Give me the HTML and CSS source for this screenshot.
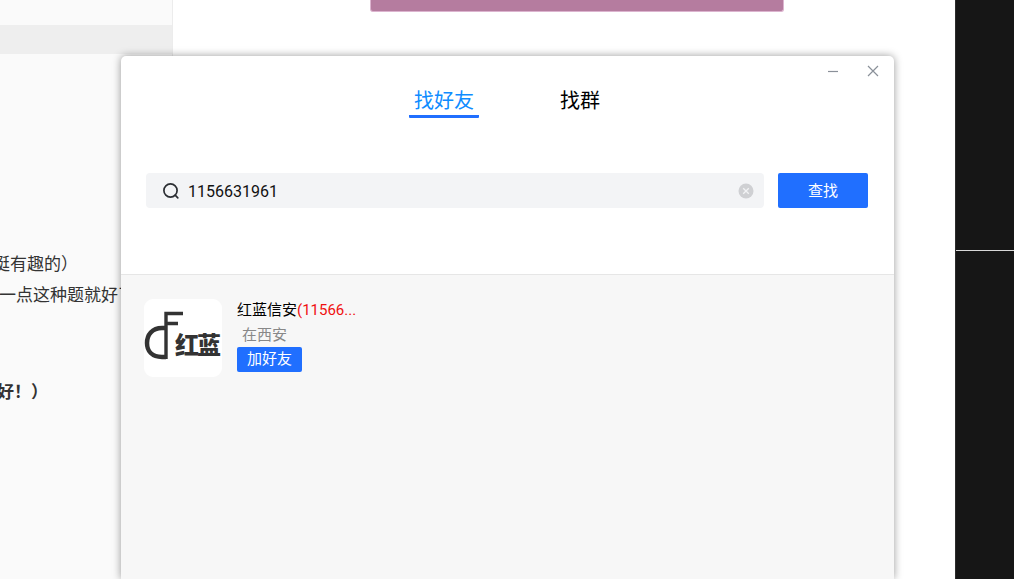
FILE: index.html
```html
<!DOCTYPE html>
<html lang="zh-CN">
<head>
    <meta charset="UTF-8">
    <meta name="viewport" content="width=device-width, initial-scale=1.0">
    <title>找好友</title>
    <link rel="stylesheet" href="styles.css">
</head>
<body>
    <div class="page">
        <aside class="sidebar">
            <div class="sidebar-stripe"></div>
            <div class="article">
                <p class="line line-first">挺有趣的）</p>
                <p class="line line-second">一点这种题就好了</p>
                <p class="line line-bold">好！）</p>
            </div>
        </aside>
        <main class="main">
            <div class="banner"></div>
        </main>
        <div class="dark-panel">
            <div class="dark-top"></div>
            <div class="dark-bottom"></div>
        </div>
    </div>

    <section class="dialog">
        <div class="window-controls">
            <svg class="icon-min" width="12" height="12" viewBox="0 0 12 12"><path d="M1 6.5h10" stroke="#8a9099" stroke-width="1.2"/></svg>
            <svg class="icon-close" width="12" height="12" viewBox="0 0 12 12"><path d="M1 1l10 10M11 1L1 11" stroke="#8a9099" stroke-width="1.2" fill="none"/></svg>
        </div>

        <nav class="tabs">
            <a class="tab tab-active">找好友</a>
            <a class="tab">找群</a>
        </nav>

        <form class="search-row">
            <div class="search-box">
                <svg class="icon-search" width="18" height="18" viewBox="0 0 18 18"><circle cx="8.5" cy="8.5" r="6.6" stroke="#2b2e33" stroke-width="1.7" fill="none"/><path d="M13.2 13.2l2.6 2.6" stroke="#2b2e33" stroke-width="1.7" stroke-linecap="round"/></svg>
                <span class="search-value">1156631961</span>
                <svg class="icon-clear" width="16" height="16" viewBox="0 0 16 16"><circle cx="8" cy="8" r="7.5" fill="#cfd0d3"/><path d="M5.2 5.2l5.6 5.6M10.8 5.2l-5.6 5.6" stroke="#f2f3f5" stroke-width="1.3"/></svg>
            </div>
            <button type="button" class="search-btn">查找</button>
        </form>

        <div class="results">
            <div class="result">
                <div class="avatar">
                    <svg width="78" height="78" viewBox="0 0 78 78">
                        <path d="M22 29h-4C8 29 3 36 3 44s5 14 15 14h4" stroke="#333" stroke-width="4.500" fill="none"/>
                        <path d="M22 60V14.500h17M22 24.500h12" stroke="#333" stroke-width="3.400" fill="none"/>
                        <text class="avatar-text" x="31" y="55">红蓝</text>
                    </svg>
                </div>
                <div class="result-info">
                    <div class="result-name">红蓝信安<span class="result-id">(11566...</span></div>
                    <div class="result-place">在西安</div>
                    <button type="button" class="add-btn">加好友</button>
                </div>
            </div>
        </div>
    </section>
</body>
</html>
```

FILE: styles.css
```css
/* Page behind the dialog */
html, body {
    height: 100%;
}

body {
    margin: 0;
    overflow: hidden;
    background-color: #fff;
    font-family: "Noto Sans CJK SC", "Noto Sans", sans-serif;
    color: #000;
}

.page {
    display: flex;
    height: 579px;
}

.sidebar {
    width: 172px;
    background-color: #fafafa;
    border-right: 1px solid #ececec;
    overflow: hidden;
}

.sidebar-stripe {
    height: 29px;
    margin-top: 25px;
    background-color: #eeeeee;
}

.article {
    padding-top: 195px;
    font-size: 17px;
    color: #333;
}

.line {
    margin: 0;
    height: 28px;
    line-height: 28px;
    white-space: nowrap;
}

.line-first {
    margin-left: -7px;
}

.line-second {
    margin-top: 3px;
    margin-left: -1px;
}

.line-bold {
    margin-top: 69px;
    margin-left: -3px;
    font-weight: 700;
}

.main {
    flex: 1;
    display: flex;
    justify-content: center;
}

.banner {
    width: 412px;
    height: 11px;
    margin-left: 26px;
    background-color: #b57c9f;
    border: 1px solid #dcb4cf;
    border-top: none;
    border-radius: 0 0 3px 3px;
}

.dark-panel {
    width: 59px;
    box-sizing: border-box;
    display: flex;
    flex-direction: column;
    background-color: #161616;
    border-left: 1px solid #2c2c2c;
}

.dark-top {
    height: 250px;
    border-bottom: 1px solid #d8d8d8;
}

.dark-bottom {
    flex: 1;
}

/* Dialog */
.dialog {
    position: absolute;
    left: 121px;
    top: 56px;
    width: 773px;
    height: 523px;
    display: flex;
    flex-direction: column;
    background-color: #fff;
    border-radius: 5px 5px 0 0;
    box-shadow: 0 0 8px rgba(0, 0, 0, 0.4);
}

.window-controls {
    display: flex;
    justify-content: flex-end;
    gap: 28px;
    height: 30px;
    padding: 9px 15px 0 0;
    box-sizing: border-box;
}

.tabs {
    display: flex;
    justify-content: center;
    gap: 76px;
    height: 32px;
    margin-left: -1px;
}

.tab {
    display: block;
    padding: 0 5px;
    height: 29px;
    line-height: 28px;
    font-size: 20px;
    color: #000;
}

.tab-active {
    color: #0f8cff;
    border-bottom: 3px solid #206fff;
    border-radius: 1px;
}

.search-row {
    display: flex;
    gap: 14px;
    margin: 55px 26px 0 25px;
}

.search-box {
    flex: 1;
    height: 35px;
    display: flex;
    align-items: center;
    padding: 0 10px 0 16px;
    background-color: #f3f4f6;
    border-radius: 4px;
}

.search-value {
    flex: 1;
    margin-left: 8px;
    padding-top: 1px;
    font-family: Roboto, sans-serif;
    font-size: 16px;
    color: #111;
}

.search-btn {
    width: 90px;
    height: 35px;
    padding: 0 0 3px;
    border: none;
    border-radius: 2px;
    background-color: #206fff;
    color: #fff;
    font-family: inherit;
    font-size: 15px;
}

.results {
    flex: 1;
    margin-top: 66px;
    padding: 24px 23px;
    background-color: #f7f7f7;
    border-top: 1px solid #e6e6e6;
}

.result {
    display: flex;
    gap: 15px;
}

.avatar {
    width: 78px;
    height: 78px;
    background-color: #fff;
    border-radius: 9px;
}

.avatar-text {
    font-size: 24px;
    font-weight: 900;
    letter-spacing: -2px;
    fill: #333;
}

.result-info {
    display: flex;
    flex-direction: column;
    align-items: flex-start;
}

.result-name {
    height: 20px;
    line-height: 20px;
    font-size: 15px;
    color: #000;
}

.result-id {
    color: #f01010;
    font-family: Roboto, "Noto Sans CJK SC", sans-serif;
}

.result-place {
    margin: 5px 0 0 5px;
    height: 23px;
    line-height: 20px;
    font-size: 15px;
    color: #888;
}

.add-btn {
    width: 65px;
    height: 25px;
    padding: 0 0 3px;
    border: none;
    border-radius: 2px;
    background-color: #206fff;
    color: #fff;
    font-family: inherit;
    font-size: 15px;
    line-height: 20px;
}
```
